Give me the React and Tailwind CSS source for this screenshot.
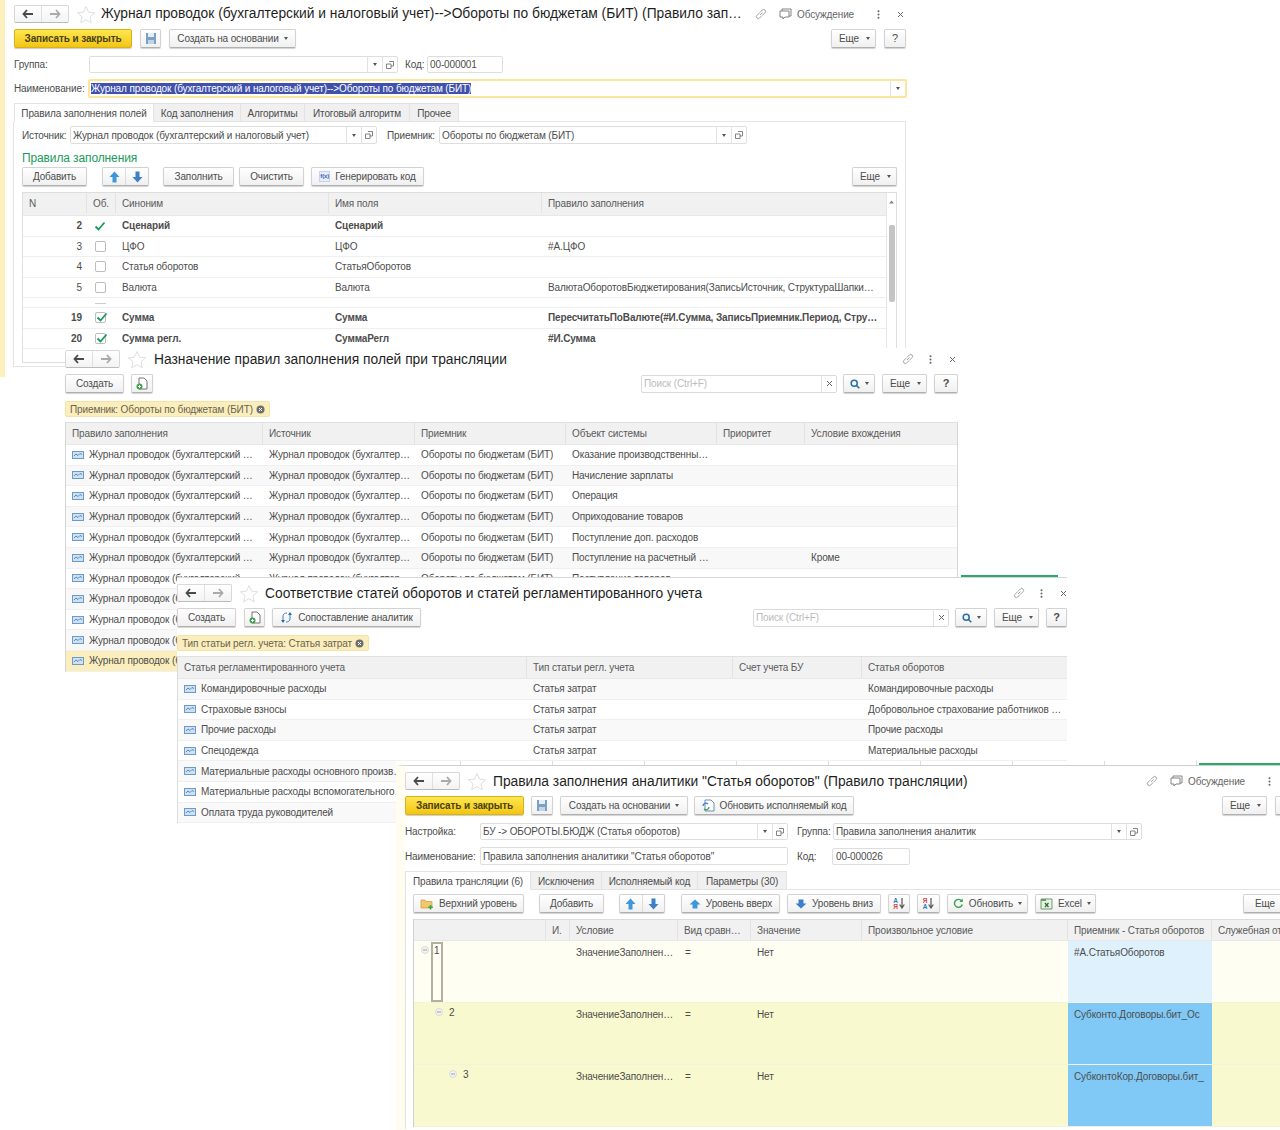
import React from "react";

const Caret = ({ c = "" }) => (
  <span className={"inline-block w-0 h-0 border-x-[2.5px] border-t-[3px] border-x-transparent border-t-[#555] " + c} />
);

const ArrowL = () => (
  <svg width="12" height="10" viewBox="0 0 12 10"><path d="M5 1 1.5 5 5 9M2 5h9" fill="none" stroke="#4a4a4a" strokeWidth="1.8" /></svg>
);
const ArrowR = () => (
  <svg width="12" height="10" viewBox="0 0 12 10"><path d="M7 1l3.5 4L7 9M10 5H1" fill="none" stroke="#aaa" strokeWidth="1.8" /></svg>
);
const Star = () => (
  <svg width="20" height="19" viewBox="0 0 20 19"><path d="M10 1.500l2.500 5.600 6 .7-4.500 4 1.300 6L10 14.700 4.700 17.800l1.300-6-4.500-4 6-.7z" fill="#fff" stroke="#dfdfdf" strokeWidth="1" /></svg>
);
const Save = () => (
  <svg width="12" height="13" viewBox="0 0 12 13"><path d="M1 1h10v11H1z" fill="#7c9fc4" /><path d="M3 1h6v4H3z" fill="#e6edf5" /><path d="M3 8h6v4H3z" fill="#c3d4e6" /></svg>
);
const Copy = () => (
  <svg width="8" height="8" viewBox="0 0 8 8"><path d="M3 .5h4.500v4.500H5M.5 3H5v4.500H.5z" fill="#fff" stroke="#666" strokeWidth=".8" /></svg>
);
const Up = () => (
  <svg width="11" height="12" viewBox="0 0 11 12"><path d="M5.500.5 10.500 6H7.500v5.500h-4V6H.5z" fill="#3d97d8" /></svg>
);
const Down = () => (
  <svg width="11" height="12" viewBox="0 0 11 12"><path d="M5.500 11.500.5 6h3V.5h4V6h3z" fill="#3d7fc8" /></svg>
);
const LevelUp = () => (
  <svg width="12" height="10" viewBox="0 0 12 10"><path d="M6 .5 11.500 5.500H8.500V9.500h-5V5.500H.5z" fill="#3d97d8" /></svg>
);
const LevelDown = () => (
  <svg width="12" height="10" viewBox="0 0 12 10"><path d="M6 9.500.5 4.500h3V.5h5v4h3z" fill="#3d7fc8" /></svg>
);
const DocAdd = () => (
  <svg width="12" height="13" viewBox="0 0 12 13"><path d="M3 1h5l3 3v8H3z" fill="#fff" stroke="#777" /><circle cx="3.500" cy="9.500" r="3" fill="#3fa34d" /><path d="M3.500 8v3M2 9.500h3" stroke="#fff" /></svg>
);
const TableIcon = () => (
  <svg width="12" height="8" viewBox="0 0 12 8" className="shrink-0"><rect x=".5" y=".5" width="11" height="7" fill="#cfe0f1" stroke="#6b9bc9" /><path d="M2 5l2-2 2 1.500 2-2 2 1" fill="none" stroke="#3e75ab" strokeWidth=".8" /></svg>
);
const Link = ({ s = 12 }) => (
  <svg width={s} height={s} viewBox="0 0 12 12"><path d="M5 7l2.500-2.500M4.500 4.800 2 7.300a1.900 1.900 0 0 0 2.700 2.700l2.400-2.500M7.500 7.200 10 4.700A1.900 1.900 0 0 0 7.300 2L4.900 4.500" fill="none" stroke="#999" strokeWidth=".9" /></svg>
);
const Chat = () => (
  <svg width="13" height="12" viewBox="0 0 13 12"><path d="M3 3V1h9v7h-2M1 3h9v6H6l-2 2V9H1z" fill="#fff" stroke="#777" strokeWidth=".9" /></svg>
);
const Dots = () => (
  <svg width="3" height="9" viewBox="0 0 3 9"><circle cx="1.500" cy="1.200" r="1" fill="#666" /><circle cx="1.500" cy="4.500" r="1" fill="#666" /><circle cx="1.500" cy="7.800" r="1" fill="#666" /></svg>
);
const Close = () => (
  <svg width="7" height="7" viewBox="0 0 7 7"><path d="M1 1l5 5M6 1 1 6" stroke="#666" strokeWidth="1" /></svg>
);
const Search = () => (
  <svg width="10" height="10" viewBox="0 0 10 10"><circle cx="4.200" cy="4.200" r="3" fill="none" stroke="#2a6f9f" strokeWidth="1.500" /><path d="M6.500 6.500 9.300 9.300" stroke="#2a6f9f" strokeWidth="1.600" /></svg>
);
const Check = () => (
  <svg width="12" height="10" viewBox="0 0 12 10"><path d="M1.500 5.500 4.500 8.500 10.500 1.500" fill="none" stroke="#1c9a5e" strokeWidth="1.800" /></svg>
);
const Minus = () => (
  <svg width="8" height="8" viewBox="0 0 8 8"><circle cx="4" cy="4" r="3.500" fill="#f3f3f3" stroke="#cfcfcf" strokeWidth=".7" /><path d="M2 4h4" stroke="#888" strokeWidth=".8" /></svg>
);
const Refresh = () => (
  <svg width="11" height="11" viewBox="0 0 11 11"><path d="M9.300 6.500A4 4 0 1 1 8.300 2.500" fill="none" stroke="#3da24f" strokeWidth="1.400" /><path d="M9.800 .6v3.400H6.400z" fill="#3da24f" /></svg>
);
const Excel = () => (
  <svg width="13" height="12" viewBox="0 0 13 12"><path d="M1 1h11v10H1z" fill="#e6f1e3" stroke="#6a9c68" /><path d="M1 1h5v2H1z" fill="#6a9c68" /><path d="M5 5l3.500 4M8.500 5 5 9" stroke="#2f6d3a" strokeWidth="1.300" /></svg>
);
const Folder = () => (
  <svg width="14" height="12" viewBox="0 0 14 12"><path d="M1 2h4l1 1.500h6V10H1z" fill="#f1c86a" stroke="#c79a3c" strokeWidth=".7" /><path d="M10.500 7v4.500M8.200 9.200h4.600" stroke="#3fa34d" strokeWidth="1.500" /></svg>
);
const Update = () => (
  <svg width="13" height="13" viewBox="0 0 13 13"><path d="M3 1h6l3 3v8H3z" fill="#fff" stroke="#6d8fb3" /><path d="M1 7a3 3 0 0 1 5-2" fill="none" stroke="#3d7fc8" strokeWidth="1.300" /><path d="M7 8a3 3 0 0 1-5 2" fill="none" stroke="#3fa34d" strokeWidth="1.300" /></svg>
);
const Match = () => (
  <svg width="13" height="13" viewBox="0 0 13 13"><path d="M3 10V5c0-2 2-3 4-3M10 3v5c0 2-2 3-4 3" fill="none" stroke="#3d7fc8" strokeWidth="1" /><path d="M1 9h4l-2 3zM8 4h4l-2-3z" fill="#2b6ea8" /></svg>
);
const SortDown = () => (
  <svg width="6" height="11" viewBox="0 0 6 11"><path d="M3 0v9M.7 6.500 3 10l2.300-3.500" fill="none" stroke="#555" strokeWidth="1.200" /></svg>
);

const Btn = ({ className = "", gap = "gap-[5px]", children }) => (
  <div className={"shrink-0 h-[19px] flex items-center justify-center whitespace-nowrap rounded-[2px] border border-[#d2d2d2] border-b-[#b0b0b0] bg-gradient-to-b from-white to-[#f0f0f0] shadow-[0_1px_1px_rgba(0,0,0,0.18)] text-[10px] text-[#4d4d4d] " + gap + " " + className}>
    {children}
  </div>
);
const More = ({ className = "" }) => (
  <Btn className={"w-[45px] pl-[2px] " + className} gap="gap-[7px]">Еще <Caret /></Btn>
);
const Yellow = ({ className = "" }) => (
  <div className={"shrink-0 h-[19px] flex items-center justify-center rounded-[2px] border border-[#d6b21c] bg-gradient-to-b from-[#fde74c] to-[#f3c50b] shadow-[0_1px_1px_rgba(0,0,0,0.2)] text-[10px] font-bold text-[#4a4210] " + className}>
    Записать и закрыть
  </div>
);
const Nav = () => (
  <div className="shrink-0 w-[55px] h-[18px] flex rounded-[2px] border border-[#d8d8d8] border-b-[#bbb] bg-gradient-to-b from-white to-[#f3f3f3]">
    <div className="flex-1 flex items-center justify-center border-r border-[#e0e0e0]"><ArrowL /></div>
    <div className="flex-1 flex items-center justify-center"><ArrowR /></div>
  </div>
);
const Field = ({ className = "", text, dd, open, h = "h-[17px]", children }) => (
  <div className={"shrink-0 flex items-center rounded-[2px] border border-[#dedede] bg-white text-[10px] text-[#4d4d4d] " + h + " " + className}>
    <div className="flex-1 min-w-0 pl-[2px] whitespace-nowrap overflow-hidden">{children || text}</div>
    {dd && <div className="w-[15px] h-full flex items-center justify-center border-l border-[#e2e2e2]"><Caret /></div>}
    {open && <div className="w-[15px] h-full flex items-center justify-center border-l border-[#e2e2e2]"><Copy /></div>}
  </div>
);
const SearchBox = ({ className = "" }) => (
  <div className={"shrink-0 flex items-center h-[18px] rounded-[2px] border border-[#dadada] bg-white text-[10px] text-[#bbb] " + className}>
    <div className="flex-1 pl-[2px] whitespace-nowrap">Поиск (Ctrl+F)</div>
    <div className="w-[15px] h-full flex items-center justify-center border-l border-[#e2e2e2]"><Close /></div>
  </div>
);
const Chip = ({ className = "", children }) => (
  <div className={"h-[16px] flex items-center justify-between whitespace-nowrap pl-[4px] pr-[4px] rounded-[2px] bg-[#fbeebd] border border-[#f5e3a5] text-[10px] text-[#6a6350] " + className}>
    {children}
    <svg width="9" height="9" viewBox="0 0 9 9"><circle cx="4.500" cy="4.500" r="4" fill="#6f6f6f" /><path d="M3 3l3 3M6 3 3 6" stroke="#fff" strokeWidth="1" /></svg>
  </div>
);
const Tab = ({ active, className = "", children }) => (
  <div className={"h-[19px] pt-[2px] flex items-center justify-center whitespace-nowrap text-[10px] text-[#4d4d4d] border border-[#e3e3e3] " + (active ? "bg-white border-b-white" : "bg-[#f0f0f0] border-l-0") + " " + className}>
    {children}
  </div>
);
const Head = ({ children, className = "" }) => (
  <div className={"h-full flex items-center pl-[6px] border-r border-[#e3e3e3] whitespace-nowrap overflow-hidden text-[10px] text-[#5a5a5a] " + className}>{children}</div>
);
const Cell = ({ children, className = "" }) => (
  <div className={"h-full flex items-center pl-[6px] whitespace-nowrap overflow-hidden text-[10px] text-[#4d4d4d] " + className}>{children}</div>
);
const Box = ({ checked }) => (
  <div className="relative w-[11px] h-[11px] rounded-[2px] border border-[#bdbdbd] bg-white">
    {checked && <div className="absolute left-0 -top-px"><Check /></div>}
  </div>
);

const G1 = "grid grid-cols-[64px_29px_213px_213px_346px]";
const t1 = [
  ["2", "ok", "Сценарий", "Сценарий", "", true],
  ["3", "", "ЦФО", "ЦФО", "#А.ЦФО", false],
  ["4", "", "Статья оборотов", "СтатьяОборотов", "", false],
  ["5", "", "Валюта", "Валюта", "ВалютаОборотовБюджетирования(ЗаписьИсточник, СтруктураШапки…", false],
];
const t1b = [
  ["19", "Сумма", "Сумма", "ПересчитатьПоВалюте(#И.Сумма, ЗаписьПриемник.Период, Стру…"],
  ["20", "Сумма регл.", "СуммаРегл", "#И.Сумма"],
];

const Window1 = () => (
  <div className="absolute left-[5px] top-0 w-[902px] h-[368px] pl-[9px] bg-white">
    <div className="flex items-center h-[18px] mt-[5px]">
      <Nav />
      <div className="ml-[7px] w-[20px]"><Star /></div>
      <div className="ml-[5px] w-[644px] text-[13.8px] tracking-normal text-[#1f1f1f] whitespace-nowrap overflow-hidden">Журнал проводок (бухгалтерский и налоговый учет)--&gt;Обороты по бюджетам (БИТ) (Правило зап…</div>
      <div className="ml-[10px]"><Link /></div>
      <div className="ml-[12px]"><Chat /></div>
      <div className="ml-[5px] text-[10px] text-[#666]">Обсуждение</div>
      <div className="ml-[23px]"><Dots /></div>
      <div className="ml-[17px]"><Close /></div>
    </div>
    <div className="flex items-center mt-[6px]">
      <Yellow className="w-[118px]" />
      <Btn className="ml-[8px] w-[21px]"><Save /></Btn>
      <Btn className="ml-[8px] w-[127px]">Создать на основании <Caret /></Btn>
      <More className="ml-[535px]" />
      <Btn className="ml-[8px] w-[22px] text-[11px]">?</Btn>
    </div>
    <div className="flex items-center mt-[8px]">
      <div className="w-[75px] text-[10px]">Группа:</div>
      <Field className="w-[309px]" dd open />
      <div className="ml-[7px] w-[22px] text-[10px]">Код:</div>
      <Field className="w-[76px]" text="00-000001" />
    </div>
    <div className="flex items-center mt-[6px]">
      <div className="w-[74px] text-[10px] whitespace-nowrap">Наименование:</div>
      <div className="w-[819px] h-[19px] flex items-center border-2 border-[#fbe59b] rounded-[2px] bg-white pl-[1px]">
        <span className="h-[11px] leading-[11px] w-[380px] bg-[#3f51ad] text-white text-[10px] whitespace-nowrap overflow-hidden">Журнал проводок (бухгалтерский и налоговый учет)--&gt;Обороты по бюджетам (БИТ)</span>
        <div className="ml-auto w-[15px] h-full flex items-center justify-center border-l border-[#e2e2e2]"><Caret /></div>
      </div>
    </div>
    <div className="flex mt-[5px] relative z-10 -mb-px">
      <Tab active className="w-[140px]">Правила заполнения полей</Tab>
      <Tab className="w-[87px]">Код заполнения</Tab>
      <Tab className="w-[64px]">Алгоритмы</Tab>
      <Tab className="w-[105px]">Итоговый алгоритм</Tab>
      <Tab className="w-[49px]">Прочее</Tab>
    </div>
    <div className="ml-[-1px] w-[893px] h-[246px] border border-[#e4e4e4] px-[8px]">
      <div className="flex items-center mt-[4px]">
        <div className="w-[48px] text-[10px]">Источник:</div>
        <Field className="w-[307px]" h="h-[18px]" text="Журнал проводок (бухгалтерский и налоговый учет)" dd open />
        <div className="ml-[10px] w-[52px] text-[10px]">Приемник:</div>
        <Field className="w-[308px]" h="h-[18px]" text="Обороты по бюджетам (БИТ)" dd open />
      </div>
      <div className="mt-[6px] h-[17px] leading-[17px] text-[12px] text-[#1b9a5c]">Правила заполнения</div>
      <div className="flex items-center">
        <Btn className="w-[65px]">Добавить</Btn>
        <div className="shrink-0 ml-[15px] w-[47px] h-[19px] flex rounded-[2px] border border-[#d2d2d2] border-b-[#b0b0b0] bg-gradient-to-b from-white to-[#f0f0f0] shadow-[0_1px_1px_rgba(0,0,0,0.18)]">
          <div className="flex-1 flex items-center justify-center border-r border-[#ddd]"><Up /></div>
          <div className="flex-1 flex items-center justify-center"><Down /></div>
        </div>
        <Btn className="ml-[14px] w-[71px]">Заполнить</Btn>
        <Btn className="ml-[5px] w-[65px]">Очистить</Btn>
        <Btn className="ml-[7px] w-[113px]"><span className="text-[6px] text-[#3a62b8] font-bold bg-[#e8eefa] border border-[#c7d3ee] leading-[9px]">f(x)</span> Генерировать код</Btn>
        <More className="ml-[428px]" />
      </div>
      <div className="relative mt-[6px] w-[875px] h-[171px] border border-[#dedede] overflow-hidden">
        <div className={G1 + " h-[23px] pb-[2px] bg-[#f1f1f1] border-b border-[#e8e8e8]"}>
          <Head>N</Head>
          <Head>Об.</Head>
          <Head>Синоним</Head>
          <Head>Имя поля</Head>
          <Head className="border-r-0">Правило заполнения</Head>
        </div>
        {t1.map((r) => (
          <div key={r[0]} className={G1 + " h-[20.5px] border-b border-[#efefef] " + (r[5] ? "font-bold" : "")}>
            <Cell className="justify-end pr-[5px]">{r[0]}</Cell>
            <div className="flex items-center justify-center pr-[3px]">{r[1] ? <Check /> : <Box />}</div>
            <Cell>{r[2]}</Cell>
            <Cell>{r[3]}</Cell>
            <Cell>{r[4]}</Cell>
          </div>
        ))}
        <div className={G1 + " h-[10px] border-b border-[#efefef]"}>
          <div />
          <div className="flex justify-center pt-[5px] pr-[3px]"><div className="w-[11px] h-[1px] bg-[#ccc]" /></div>
        </div>
        {t1b.map((r) => (
          <div key={r[0]} className={G1 + " h-[20.5px] border-b border-[#efefef] font-bold"}>
            <Cell className="justify-end pr-[5px]">{r[0]}</Cell>
            <div className="flex items-center justify-center pr-[3px]"><Box checked /></div>
            <Cell>{r[1]}</Cell>
            <Cell>{r[2]}</Cell>
            <Cell>{r[3]}</Cell>
          </div>
        ))}
        <div className="absolute right-0 top-0 bottom-0 w-[10px] bg-white border-l border-[#e6e6e6]">
          <svg width="9" height="6" viewBox="0 0 9 6" className="mx-auto mt-[6px]"><path d="M4.500 1.500 7 4.500H2z" fill="#888" /></svg>
          <div className="mx-auto mt-[20px] w-[6px] h-[77px] rounded-[2px] bg-[#c4c4c4]" />
        </div>
      </div>
    </div>
  </div>
);

const G2 = "grid grid-cols-[197px_152px_151px_151px_88px_153px]";
const objs = ["Оказание производственны…", "Начисление зарплаты", "Операция", "Оприходование товаров", "Поступление доп. расходов", "Поступление на расчетный …", "Поступление товаров", "", "", "", ""];

const Window2 = () => (
  <div className="absolute left-[65px] top-[348px] w-[893px] h-[328px] bg-white">
    <div className="flex items-center h-[18px] mt-[2px]">
      <Nav />
      <div className="ml-[7px] w-[20px]"><Star /></div>
      <div className="ml-[7px] pt-[2px] w-[747px] text-[13.8px] tracking-normal text-[#1f1f1f] whitespace-nowrap">Назначение правил заполнения полей при трансляции</div>
      <div className="ml-[1px]"><Link /></div>
      <div className="ml-[15px]"><Dots /></div>
      <div className="ml-[17px]"><Close /></div>
    </div>
    <div className="flex items-center mt-[6px]">
      <Btn className="w-[59px]">Создать</Btn>
      <Btn className="ml-[7px] w-[22px]"><DocAdd /></Btn>
      <SearchBox className="ml-[488px] w-[196px]" />
      <Btn className="ml-[6px] w-[32px]"><Search /><Caret /></Btn>
      <More className="ml-[7px]" />
      <Btn className="ml-[7px] w-[24px] text-[11px] font-bold">?</Btn>
    </div>
    <Chip className="mt-[8px] w-[205px]">Приемник: Обороты по бюджетам (БИТ)</Chip>
    <div className="mt-[5px] w-[893px] border-x border-x-[#d6d6d6] border-t border-t-[#e0e0e0]">
      <div className={G2 + " h-[22px] bg-[#f1f1f1] border-b border-[#e8e8e8]"}>
        <Head>Правило заполнения</Head>
        <Head>Источник</Head>
        <Head>Приемник</Head>
        <Head>Объект системы</Head>
        <Head>Приоритет</Head>
        <Head className="border-r-0">Условие вхождения</Head>
      </div>
      {objs.map((o, i) => (
        <div key={i} className={G2 + " h-[20.6px] border-b border-[#f0f0f0] " + (i === 10 ? "bg-[#fbeebd]" : i % 2 ? "bg-[#f8f8f8]" : "bg-white")}>
          <Cell className="gap-[5px]"><TableIcon /> <span>Журнал проводок (бухгалтерский …</span></Cell>
          <Cell>Журнал проводок (бухгалтер…</Cell>
          <Cell>Обороты по бюджетам (БИТ)</Cell>
          <Cell>{o}</Cell>
          <Cell />
          <Cell>{i === 5 ? "Кроме" : ""}</Cell>
        </div>
      ))}
    </div>
  </div>
);

const G3 = "grid grid-cols-[349px_206px_129px_206px]";
const t3 = [
  ["Командировочные расходы", "Командировочные расходы"],
  ["Страховые взносы", "Добровольное страхование работников …"],
  ["Прочие расходы", "Прочие расходы"],
  ["Спецодежда", "Материальные расходы"],
  ["Материальные расходы основного произв…", ""],
  ["Материальные расходы вспомогательного…", ""],
  ["Оплата труда руководителей", ""],
];

const Window3 = () => (
  <div className="absolute left-[177px] top-[577px] w-[890px] h-[246px] bg-white border-t border-[#d8d8d8]">
    <div className="flex items-center h-[18px] mt-[6px]">
      <Nav />
      <div className="ml-[7px] w-[20px]"><Star /></div>
      <div className="ml-[6px] pt-[2px] w-[750px] text-[13.8px] tracking-normal text-[#1f1f1f] whitespace-nowrap">Соответствие статей оборотов и статей регламентированного учета</div>
      <div className="ml-[1px]"><Link /></div>
      <div className="ml-[15px]"><Dots /></div>
      <div className="ml-[17px]"><Close /></div>
    </div>
    <div className="flex items-center mt-[6px]">
      <Btn className="w-[59px]">Создать</Btn>
      <Btn className="ml-[8px] w-[21px]"><DocAdd /></Btn>
      <Btn className="ml-[7px] w-[149px]"><Match /> Сопоставление аналитик</Btn>
      <SearchBox className="ml-[332px] w-[196px]" />
      <Btn className="ml-[6px] w-[32px]"><Search /><Caret /></Btn>
      <More className="ml-[7px]" />
      <Btn className="ml-[7px] w-[21px] text-[11px] font-bold">?</Btn>
    </div>
    <Chip className="mt-[8px] w-[192px]">Тип статьи регл. учета: Статья затрат</Chip>
    <div className="mt-[5px] w-[890px] border-l border-[#dcdcdc] border-t border-t-[#e0e0e0]">
      <div className={G3 + " h-[22px] bg-[#f1f1f1] border-b border-[#e8e8e8]"}>
        <Head>Статья регламентированного учета</Head>
        <Head>Тип статьи регл. учета</Head>
        <Head>Счет учета БУ</Head>
        <Head className="border-r-0">Статья оборотов</Head>
      </div>
      {t3.map((r, i) => (
        <div key={i} className={G3 + " h-[20.6px] border-b border-[#f0f0f0] " + (i % 2 ? "bg-white" : "bg-[#f9f9f9]")}>
          <Cell className="gap-[5px]"><TableIcon /> <span>{r[0]}</span></Cell>
          <Cell>Статья затрат</Cell>
          <Cell />
          <Cell>{r[1]}</Cell>
        </div>
      ))}
    </div>
  </div>
);

const G4 = "grid grid-cols-[132px_24px_108px_73px_111px_206px_144px_68px]";
const t4 = [
  { n: "1", pl: "pl-[7px]", bg: "bg-[#fffef3]", cell: "bg-[#dff1fc]", v: "#А.СтатьяОборотов" },
  { n: "2", pl: "pl-[21px]", bg: "bg-[#f9f9cf]", cell: "bg-[#80c9f6]", v: "Субконто.Договоры.бит_Ос" },
  { n: "3", pl: "pl-[35px]", bg: "bg-[#f9f9cf]", cell: "bg-[#80c9f6]", v: "СубконтоКор.Договоры.бит_" },
];

const Window4 = () => (
  <div className="absolute left-[396px] top-[765px] w-[884px] h-[365px] overflow-hidden bg-white border-t border-[#cfcfcf] border-l-[9px] border-l-[#fefdf0]">
    <div className="flex items-center h-[18px] mt-[6px]">
      <Nav />
      <div className="ml-[7px] w-[20px]"><Star /></div>
      <div className="ml-[6px] pt-[2px] w-[650px] text-[13.8px] tracking-normal text-[#1f1f1f] whitespace-nowrap">Правила заполнения аналитики "Статья оборотов" (Правило трансляции)</div>
      <div className="ml-[3px]"><Link /></div>
      <div className="ml-[12px]"><Chat /></div>
      <div className="ml-[5px] text-[10px] text-[#666]">Обсуждение</div>
      <div className="ml-[23px]"><Dots /></div>
    </div>
    <div className="flex items-center mt-[6px]">
      <Yellow className="w-[119px]" />
      <Btn className="ml-[7px] w-[22px]"><Save /></Btn>
      <Btn className="ml-[7px] w-[128px]">Создать на основании <Caret /></Btn>
      <Btn className="ml-[6px] w-[160px]"><Update /> Обновить исполняемый код</Btn>
      <More className="ml-[368px]" />
      <Btn className="ml-[8px] w-[22px] text-[11px]">?</Btn>
    </div>
    <div className="flex items-center mt-[8px]">
      <div className="w-[75px] text-[10px]">Настройка:</div>
      <Field className="w-[308px]" text="БУ -> ОБОРОТЫ.БЮДЖ (Статья оборотов)" dd open />
      <div className="ml-[9px] w-[36px] text-[10px]">Группа:</div>
      <Field className="w-[309px]" text="Правила заполнения аналитик" dd open />
    </div>
    <div className="flex items-center mt-[7px]">
      <div className="w-[75px] text-[10px] whitespace-nowrap">Наименование:</div>
      <Field className="w-[308px]" h="h-[18px]" text={'Правила заполнения аналитики "Статья оборотов"'} />
      <div className="ml-[9px] w-[35px] text-[10px]">Код:</div>
      <Field className="w-[78px] pl-[1px]" text="00-000026" />
    </div>
    <div className="flex mt-[6px] relative z-10 -mb-px">
      <Tab active className="w-[126px]">Правила трансляции (6)</Tab>
      <Tab className="w-[71px]">Исключения</Tab>
      <Tab className="w-[96px]">Исполняемый код</Tab>
      <Tab className="w-[89px]">Параметры (30)</Tab>
    </div>
    <div className="w-[880px] border-t border-l border-[#e4e4e4] pl-[7px] h-[240px]">
      <div className="flex items-center mt-[4px] w-[870px]">
        <Btn className="w-[111px]"><Folder /> Верхний уровень</Btn>
        <Btn className="ml-[15px] w-[65px]">Добавить</Btn>
        <div className="shrink-0 ml-[15px] w-[46px] h-[19px] flex rounded-[2px] border border-[#d2d2d2] border-b-[#b0b0b0] bg-gradient-to-b from-white to-[#f0f0f0] shadow-[0_1px_1px_rgba(0,0,0,0.18)]">
          <div className="flex-1 flex items-center justify-center border-r border-[#ddd]"><Up /></div>
          <div className="flex-1 flex items-center justify-center"><Down /></div>
        </div>
        <Btn className="ml-[16px] w-[99px]"><LevelUp /> Уровень вверх</Btn>
        <Btn className="ml-[7px] w-[94px]"><LevelDown /> Уровень вниз</Btn>
        <Btn className="ml-[7px] w-[22px]" gap="gap-[1px]">
          <span className="flex flex-col text-[6.5px] leading-[6px] font-bold"><span className="text-[#2b7cc2]">А</span><span className="text-[#d04a4a]">Я</span></span>
          <SortDown />
        </Btn>
        <Btn className="ml-[7px] w-[23px]" gap="gap-[1px]">
          <span className="flex flex-col text-[6.5px] leading-[6px] font-bold"><span className="text-[#d04a4a]">Я</span><span className="text-[#2b7cc2]">А</span></span>
          <SortDown />
        </Btn>
        <Btn className="ml-[7px] w-[81px]"><Refresh /> Обновить <Caret /></Btn>
        <Btn className="ml-[7px] w-[61px]"><Excel /> Excel <Caret /></Btn>
        <Btn className="ml-[147px] w-[45px] justify-start pl-[11px]">Еще</Btn>
      </div>
      <div className="mt-[6px] w-[867px] border-l border-[#d0d0d0] border-t border-t-[#dcdcdc]">
        <div className={G4 + " h-[21px] bg-[#f1f1f1] border-b border-[#e8e8e8]"}>
          <Head />
          <Head>И.</Head>
          <Head>Условие</Head>
          <Head>Вид сравн…</Head>
          <Head>Значение</Head>
          <Head>Произвольное условие</Head>
          <Head>Приемник - Статья оборотов</Head>
          <Head className="border-r-0">Служебная от</Head>
        </div>
        {t4.map((r) => (
          <div key={r.n} className={G4 + " h-[62px] border-b border-[#f3f3dd] " + r.bg}>
            <div className={"flex items-start gap-[3px] pt-[5px] text-[10px] text-[#4d4d4d] " + r.pl}>
              <Minus />
              {r.n === "1" ? (
                <div className="-mt-[4px] -ml-[1px] w-[12px] h-[60px] pl-[1px] pt-[1px] leading-[12px] border-2 border-[#b4b0a0] bg-[#fffef3]">{r.n}</div>
              ) : (
                <span className="ml-[3px] leading-[10px]">{r.n}</span>
              )}
            </div>
            <div />
            <div className="pl-[6px] pt-[4px] text-[10px] text-[#4d4d4d] whitespace-nowrap overflow-hidden">ЗначениеЗаполнен…</div>
            <div className="pl-[7px] pt-[4px] text-[10px] text-[#4d4d4d]">=</div>
            <div className="pl-[6px] pt-[4px] text-[10px] text-[#4d4d4d]">Нет</div>
            <div />
            <div className={"pl-[6px] pt-[4px] text-[10px] text-[#4d4d4d] whitespace-nowrap overflow-hidden " + r.cell}>{r.v}</div>
            <div />
          </div>
        ))}
      </div>
    </div>
  </div>
);

export default function App() {
  return (
    <div className="relative w-[1280px] h-[1130px] overflow-hidden bg-white font-['Liberation_Sans',Arial,sans-serif] text-[10px] tracking-[-0.12px] text-[#4d4d4d]">
      <div className="absolute left-0 top-0 w-[5px] h-[377px] bg-[#fdf0bd]" />
      <Window1 />
      <Window2 />
      <div className="absolute left-[961px] top-[575px] w-[97px] h-[2px] bg-[#2ea866]" />
      <Window3 />
      <div className="absolute left-[396px] top-[761px] w-[803px] h-[4px] flex bg-white">
        <div className="w-[65px] border-r border-[#ddd]" />
        <div className="w-[92px] border-r border-[#ddd]" />
        <div className="w-[92px] border-r border-[#ddd]" />
        <div className="w-[92px] border-r border-[#ddd]" />
        <div className="w-[92px] border-r border-[#ddd]" />
        <div className="w-[92px] border-r border-[#ddd]" />
        <div className="w-[92px] border-r border-[#ddd]" />
        <div className="w-[92px] border-r border-[#ddd]" />
        <div className="w-[92px] border-r border-[#ddd]" />
      </div>
      <div className="absolute left-[1199px] top-[763px] w-[81px] h-[2px] bg-[#2ea866]" />
      <Window4 />
    </div>
  );
}
